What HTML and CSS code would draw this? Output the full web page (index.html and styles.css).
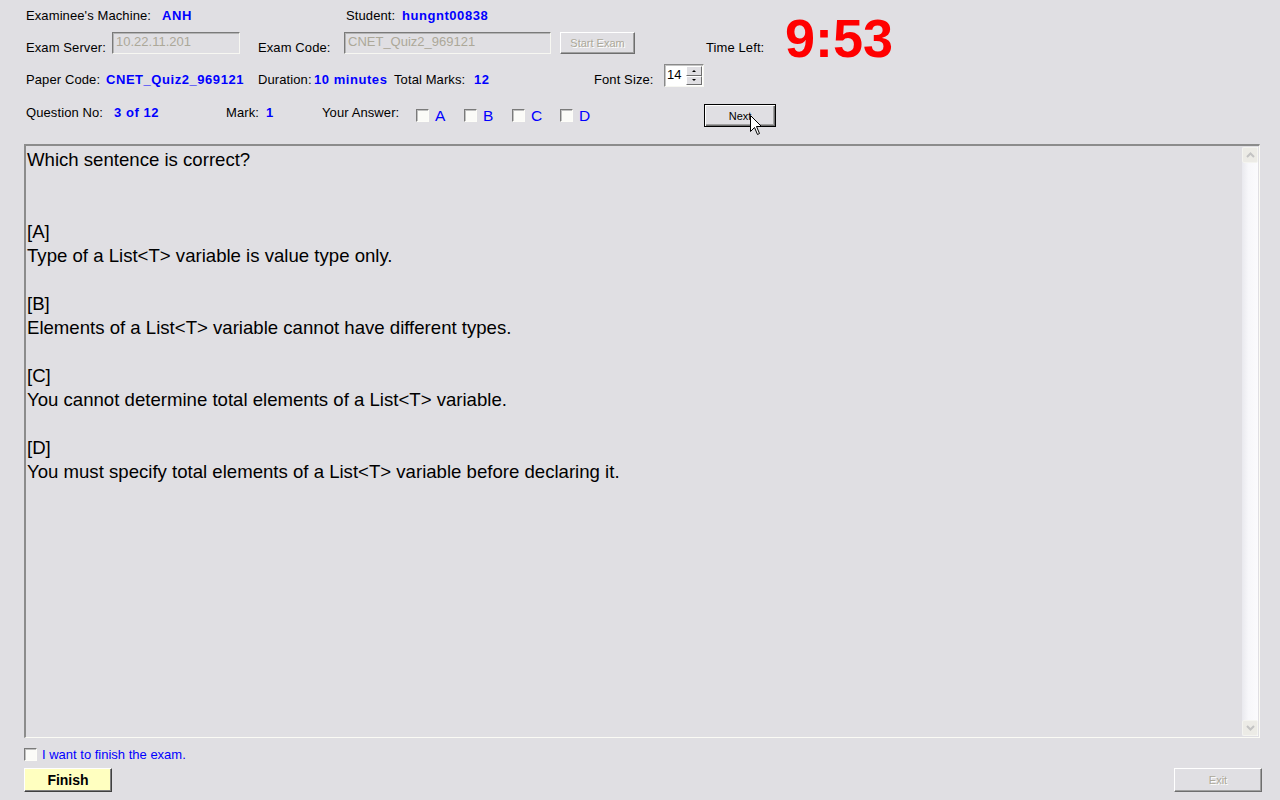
FILE: index.html
```html
<!DOCTYPE html>
<html>
<head>
<meta charset="utf-8">
<title>Exam</title>
<link rel="stylesheet" href="styles.css">
</head>
<body>
<div class="app">
  <header class="head">
    <div class="head-top">
      <div class="head-left">
        <div class="row r1">
          <span class="lbl c-machine">Examinee's Machine:</span>
          <span class="val c-anh">ANH</span>
          <span class="lbl c-student">Student:</span>
          <span class="val">hungnt00838</span>
        </div>
        <div class="row r2">
          <span class="lbl c-server">Exam Server:</span>
          <div class="field f-server">10.22.11.201</div>
          <span class="lbl c-code">Exam Code:</span>
          <div class="field f-code">CNET_Quiz2_969121</div>
          <button class="btn btn-start" disabled>Start Exam</button>
        </div>
      </div>
      <div class="timebox">
        <span class="lbl c-time">Time Left:</span>
        <span class="timer">9:53</span>
      </div>
    </div>
    <div class="row r3">
      <span class="lbl c-paper">Paper Code:</span>
      <span class="val c-vpaper">CNET_Quiz2_969121</span>
      <span class="lbl c-dur">Duration:</span>
      <span class="val c-vdur">10 minutes</span>
      <span class="lbl c-total">Total Marks:</span>
      <span class="val c-vtotal">12</span>
      <span class="lbl c-font">Font Size:</span>
      <div class="spinner">
        <span class="spin-val">14</span>
        <div class="spin-btns">
          <span class="spin-btn"><i class="tri-up"></i></span>
          <span class="spin-btn"><i class="tri-down"></i></span>
        </div>
      </div>
    </div>
    <div class="row r4">
      <span class="lbl c-qno">Question No:</span>
      <span class="val c-vqno">3 of 12</span>
      <span class="lbl c-mark">Mark:</span>
      <span class="val c-vmark">1</span>
      <span class="lbl c-ans">Your Answer:</span>
      <div class="opt"><span class="chk"></span><span class="opt-letter">A</span></div>
      <div class="opt"><span class="chk"></span><span class="opt-letter">B</span></div>
      <div class="opt"><span class="chk"></span><span class="opt-letter">C</span></div>
      <div class="opt"><span class="chk"></span><span class="opt-letter">D</span></div>
      <div class="next-wrap">
        <button class="btn btn-next">Next</button>
        <svg class="cursor" width="13" height="21" viewBox="0 0 13 21"><path d="M0.5 0.5 L0.5 16.5 L4.5 12.5 L7.5 19.5 L9.5 18.5 L6.5 11.5 L11.5 11.5 Z" fill="#fff" stroke="#000" stroke-width="1"/></svg>
      </div>
    </div>
  </header>

  <div class="question">
    <div class="qtext">
      <div class="line">Which sentence is correct?</div>
      <div class="line"></div>
      <div class="line"></div>
      <div class="line">[A]</div>
      <div class="line">Type of a List&lt;T&gt; variable is value type only.</div>
      <div class="line"></div>
      <div class="line">[B]</div>
      <div class="line">Elements of a List&lt;T&gt; variable cannot have different types.</div>
      <div class="line"></div>
      <div class="line">[C]</div>
      <div class="line">You cannot determine total elements of a List&lt;T&gt; variable.</div>
      <div class="line"></div>
      <div class="line">[D]</div>
      <div class="line">You must specify total elements of a List&lt;T&gt; variable before declaring it.</div>
    </div>
    <div class="vscroll">
      <div class="sb-btn"><svg width="9" height="6" viewBox="0 0 9 6"><path d="M1 5 L4.5 1.5 L8 5" fill="none" stroke="#c3c3c3" stroke-width="2"/></svg></div>
      <div class="sb-track"></div>
      <div class="sb-btn"><svg width="9" height="6" viewBox="0 0 9 6"><path d="M1 1 L4.5 4.5 L8 1" fill="none" stroke="#c3c3c3" stroke-width="2"/></svg></div>
    </div>
  </div>

  <div class="finish-check">
    <span class="chk"></span>
    <span class="finish-lbl">I want to finish the exam.</span>
  </div>
  <div class="bottom-bar">
    <button class="btn btn-finish">Finish</button>
    <button class="btn btn-exit" disabled>Exit</button>
  </div>
</div>
</body>
</html>
```

FILE: styles.css
```css
html, body {
  margin: 0;
  padding: 0;
}
body {
  background: #e0dfe3;
  font-family: "Liberation Sans", Arial, sans-serif;
  font-size: 13px;
  color: #000;
  width: 1280px;
  height: 800px;
  overflow: hidden;
}
.app {
  width: 1280px;
  height: 800px;
}
.lbl, .val {
  line-height: 14px;
  white-space: nowrap;
}
.lbl {
  letter-spacing: 0.1px;
}
.val {
  color: #0000ff;
  font-weight: bold;
  letter-spacing: 0.55px;
}

/* header */
.head-top {
  display: flex;
  height: 64px;
}
.head-left {
  width: 706px;
  padding-left: 26px;
  box-sizing: border-box;
}
.row {
  display: flex;
}
.r1 {
  height: 32px;
  align-items: center;
}
.r2, .r3 {
  height: 32px;
  align-items: flex-start;
}
.r2 .lbl, .r3 .lbl, .r3 .val {
  margin-top: 9px;
}
.r3 {
  padding-left: 26px;
}
.r4 {
  height: 48px;
  padding: 8px 0 0 26px;
  box-sizing: border-box;
  align-items: flex-start;
}
.r4 .lbl, .r4 .val {
  margin-top: 2px;
}

.c-machine { width: 136px; }
.c-anh { width: 184px; }
.c-student { width: 56px; }
.c-server { width: 86px; }
.c-code { width: 86px; }
.c-time { width: 79px; margin-top: 41px; }
.c-paper { width: 80px; }
.c-vpaper { width: 152px; }
.c-dur { width: 56px; }
.c-vdur { width: 80px; }
.c-total { width: 80px; }
.c-vtotal { width: 120px; }
.c-font { width: 70px; }
.c-qno { width: 88px; }
.c-vqno { width: 112px; }
.c-mark { width: 40px; }
.c-vmark { width: 56px; }
.c-ans { width: 94px; }

.field {
  height: 22px;
  box-sizing: border-box;
  border: 1px solid;
  border-color: #7a7a7a #f7f7f2 #f7f7f2 #7a7a7a;
  box-shadow: inset 1px 1px 0 #b4b4b4;
  color: #aca899;
  font-size: 13px;
  line-height: 18px;
  padding-left: 3px;
  white-space: nowrap;
  overflow: hidden;
}
.f-server { width: 128px; margin-right: 18px; }
.f-code { width: 207px; margin-right: 9px; }

.btn {
  font-family: "Liberation Sans", Arial, sans-serif;
  font-size: 11px;
  background: #e0dfe3;
  box-sizing: border-box;
  border: 1px solid;
  border-color: #ffffff #6e6e6e #6e6e6e #ffffff;
  box-shadow: inset -1px -1px 0 #a0a0a0;
  padding: 0;
  margin: 0;
  color: #000;
}
.btn[disabled] {
  color: #aca899;
  text-shadow: 1px 1px 0 #ffffff;
}
.btn-start {
  width: 75px;
  height: 22px;
}

.timebox {
  display: flex;
  align-items: flex-start;
}
.timer {
  font-size: 54px;
  font-weight: bold;
  color: #ff0000;
  line-height: 54px;
  margin-top: 11px;
}

/* spinner */
.spinner {
  width: 40px;
  height: 23px;
  box-sizing: border-box;
  border: 1px solid;
  border-color: #8a8a8a #f7f7f2 #f7f7f2 #8a8a8a;
  box-shadow: inset 1px 1px 0 #c4c4c4;
  background: #fff;
  display: flex;
  align-items: stretch;
}
.spin-val {
  flex: 1;
  font-size: 13px;
  line-height: 20px;
  padding-left: 2px;
}
.spin-btns {
  width: 17px;
  display: flex;
  flex-direction: column;
  padding: 1px 1px 1px 0;
  box-sizing: border-box;
}
.spin-btn {
  flex: 1;
  background: #e0dfe3;
  border: 1px solid;
  border-color: #fff #6e6e6e #6e6e6e #fff;
  display: flex;
  align-items: center;
  justify-content: center;
}
.tri-up, .tri-down {
  width: 0;
  height: 0;
  border-left: 2px solid transparent;
  border-right: 2px solid transparent;
}
.tri-up { border-bottom: 2px solid #000; }
.tri-down { border-top: 2px solid #000; }

/* answers */
.opt {
  width: 48px;
  display: flex;
  align-items: flex-start;
}
.chk {
  width: 13px;
  height: 13px;
  box-sizing: border-box;
  border: 1px solid;
  border-color: #7a7a7a #fdfdf8 #fdfdf8 #7a7a7a;
  box-shadow: inset 1px 1px 0 #c0c0c0;
  background: #fbfbf8;
  display: inline-block;
  flex-shrink: 0;
}
.opt .chk {
  margin-top: 5px;
}
.opt-letter {
  color: #0000ff;
  font-size: 15.5px;
  line-height: 18px;
  margin: 3px 0 0 6px;
}
.next-wrap {
  position: relative;
  margin-left: 96px;
}
.btn-next {
  width: 72px;
  height: 23px;
  border: 1px solid #000;
  box-shadow: inset 1px 1px 0 #fff, inset -1px -1px 0 #6e6e6e, inset -2px -2px 0 #a0a0a0;
  display: block;
}
.cursor {
  position: absolute;
  left: 46px;
  top: 11px;
}

/* question box */
.question {
  margin-left: 24px;
  width: 1236px;
  height: 594px;
  box-sizing: border-box;
  border-style: solid;
  border-width: 2px 1px 1px 2px;
  border-color: #8c8c8c #fbfbf5 #fbfbf5 #8c8c8c;
  display: flex;
}
.qtext {
  flex: 1;
  padding: 2px 0 0 1px;
  font-size: 18.6px;
  line-height: 24px;
}
.line {
  height: 24px;
  white-space: nowrap;
}
.vscroll {
  width: 16px;
  margin: 1px 1px 1px 0;
  display: flex;
  flex-direction: column;
  background: linear-gradient(to right, #e9e9ee, #f7f7fa 40%, #fbfbfd);
}
.sb-btn {
  height: 16px;
  box-sizing: border-box;
  border: 1px solid #f4f4f0;
  background: #ecebe6;
  border-radius: 2px;
  display: flex;
  align-items: center;
  justify-content: center;
}
.sb-track {
  flex: 1;
}

/* bottom */
.finish-check {
  display: flex;
  align-items: center;
  margin: 9px 0 0 24px;
  height: 14px;
}
.finish-lbl {
  color: #0000ff;
  margin-left: 5px;
  line-height: 14px;
  position: relative;
  top: 1px;
}
.bottom-bar {
  display: flex;
  justify-content: space-between;
  margin-top: 7px;
  padding: 0 18px 0 24px;
}
.btn-finish {
  width: 88px;
  height: 24px;
  background: #ffffc0;
  font-size: 14px;
  font-weight: bold;
  border-color: #ffffff #404040 #404040 #ffffff;
  box-shadow: inset -1px -1px 0 #808080;
}
.btn-exit {
  width: 88px;
  height: 24px;
}
```
